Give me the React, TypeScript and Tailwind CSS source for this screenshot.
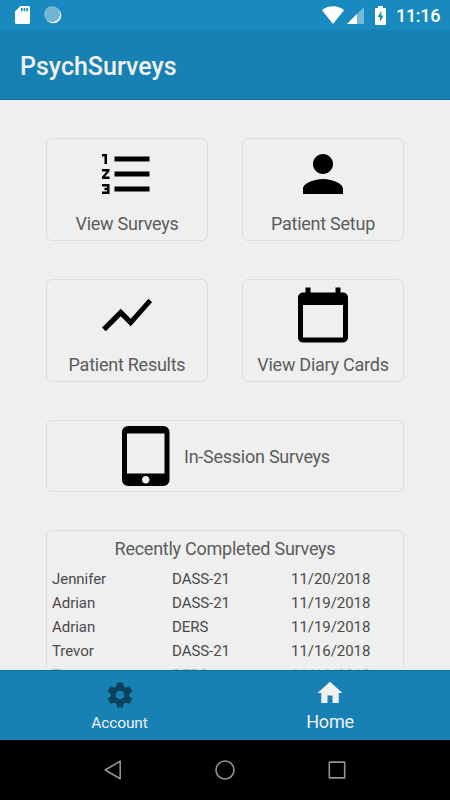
import React from 'react';

interface IconProps {
  path: string;
  className: string;
}

interface MenuCardProps {
  label: string;
  icon: string;
}

interface SurveyRow {
  name: string;
  survey: string;
  date: string;
}

const icons = {
  list: 'M2 17h2v.5H3v1h1v.5H2v1h3v-4H2v1zm1-9h1V4H2v1h1v3zm-1 3h1.8L2 13.1v.9h3v-1H3.2L5 10.9V10H2v1zm5-6v2h14V5H7zm0 14h14v-2H7v2zm0-6h14v-2H7v2z',
  person:
    'M12 12c2.21 0 4-1.79 4-4s-1.79-4-4-4-4 1.79-4 4 1.79 4 4 4zm0 2c-2.67 0-8 1.34-8 4v2h16v-2c0-2.66-5.33-4-8-4z',
  chart: 'M3.5 18.49l6-6.01 4 4L22 6.92l-1.41-1.41-7.09 7.97-4-4L2 16.99z',
  calendar:
    'M20 3h-1V1h-2v2H7V1H5v2H4c-1.1 0-2 .9-2 2v16c0 1.1.9 2 2 2h16c1.1 0 2-.9 2-2V5c0-1.1-.9-2-2-2zm0 18H4V8h16v13z',
  tablet:
    'M18.5 0h-14C3.12 0 2 1.12 2 2.5v19C2 22.88 3.12 24 4.5 24h14c1.38 0 2.5-1.12 2.5-2.5v-19C21 1.12 19.88 0 18.5 0zm-7 23c-.83 0-1.5-.67-1.5-1.5s.67-1.5 1.5-1.5 1.5.67 1.5 1.5-.67 1.5-1.5 1.5zm7.5-4H4V3h15v16z',
  settings:
    'M19.43 12.98c.04-.32.07-.64.07-.98s-.03-.66-.07-.98l2.11-1.65c.19-.15.24-.42.12-.64l-2-3.46c-.12-.22-.39-.3-.61-.22l-2.49 1c-.52-.4-1.08-.73-1.69-.98l-.38-2.65C14.46 2.18 14.25 2 14 2h-4c-.25 0-.46.18-.49.42l-.38 2.65c-.61.25-1.17.59-1.69.98l-2.49-1c-.23-.09-.49 0-.61.22l-2 3.46c-.13.22-.07.49.12.64l2.11 1.65c-.04.32-.07.65-.07.98s.03.66.07.98l-2.11 1.65c-.19.15-.24.42-.12.64l2 3.46c.12.22.39.3.61.22l2.49-1c.52.4 1.08.73 1.69.98l.38 2.65c.03.24.24.42.49.42h4c.25 0 .46-.18.49-.42l.38-2.65c.61-.25 1.17-.59 1.69-.98l2.49 1c.23.09.49 0 .61-.22l2-3.46c.12-.22.07-.49-.12-.64l-2.11-1.65zM12 15.5c-1.93 0-3.5-1.57-3.5-3.5s1.57-3.5 3.5-3.5 3.5 1.57 3.5 3.5-1.57 3.5-3.5 3.5z',
  home: 'M10 20v-6h4v6h5v-8h3L12 3 2 12h3v8z',
};

const surveys: SurveyRow[] = [
  { name: 'Jennifer', survey: 'DASS-21', date: '11/20/2018' },
  { name: 'Adrian', survey: 'DASS-21', date: '11/19/2018' },
  { name: 'Adrian', survey: 'DERS', date: '11/19/2018' },
  { name: 'Trevor', survey: 'DASS-21', date: '11/16/2018' },
  { name: 'Trevor', survey: 'DERS', date: '11/16/2018' },
];

function Icon({ path, className }: IconProps) {
  return (
    <svg viewBox="0 0 24 24" fill="currentColor" className={className}>
      <path d={path} />
    </svg>
  );
}

function MenuCard({ label, icon }: MenuCardProps) {
  return (
    <button className="flex h-[103px] flex-col items-center rounded-md border border-[#dcdcdc] pt-[5px]">
      <Icon path={icon} className="size-[60px] text-black" />
      <span className="mt-2 text-[18px] leading-6 tracking-[-0.25px]">{label}</span>
    </button>
  );
}

function StatusBar() {
  return (
    <div className="flex h-[30px] items-center bg-[#198abf] pr-[10px] pl-[15px] text-white">
      {/* SD card */}
      <svg viewBox="0 0 15 18" className="h-[18px] w-[15px]" fill="currentColor">
        <path
          fillRule="evenodd"
          d="M5.5 0H13.5Q15 0 15 1.5V16.5Q15 18 13.5 18H1.5Q0 18 0 16.5V5.5ZM6 2V5.3H7.7V2ZM8.7 2V5.3H10.3V2ZM11.3 2V5.3H13V2Z"
        />
      </svg>
      {/* Sync spinner */}
      <svg viewBox="0 0 18 18" className="ml-[14px] size-[18px]">
        <circle cx="9.3" cy="9.3" r="8" fill="#fff" />
        <circle cx="8.2" cy="8.2" r="8" fill="#6fb3d5" />
        <circle
          cx="8.2"
          cy="8.2"
          r="7.2"
          fill="none"
          stroke="#a5d0e5"
          strokeWidth="0.8"
          strokeDasharray="1 1.3"
        />
      </svg>
      <div className="ml-auto flex items-center">
        {/* Wifi */}
        <svg viewBox="0 0 22 18" className="h-[18px] w-[22px]" fill="currentColor">
          <path d="M11 18L0 4.2Q4.5 0.3 11 0.3T22 4.2Z" />
        </svg>
        {/* Signal */}
        <svg viewBox="0 0 17 17" className="ml-[3px] size-[17px]" fill="currentColor">
          <path d="M17 0V17H0Z" opacity="0.4" />
          <path d="M10 7V17H0Z" />
        </svg>
        {/* Battery */}
        <svg viewBox="0 0 11 19" className="ml-[11px] h-[19px] w-[11px]" fill="currentColor">
          <path
            fillRule="evenodd"
            d="M3 0H8V2H10Q11 2 11 3V18Q11 19 10 19H1Q0 19 0 18V3Q0 2 1 2H3ZM6.3 5L2.5 11H5V16L8.5 9.5H6.3Z"
          />
        </svg>
        <span className="ml-[10px] w-[44px] pt-px text-[18px] leading-[29px] font-medium tracking-[-0.3px] whitespace-nowrap">
          11:16
        </span>
      </div>
    </div>
  );
}

export default function App() {
  return (
    <div className="flex h-[800px] w-[450px] flex-col overflow-hidden bg-[#efefef] font-[Roboto,sans-serif] text-[#5c5c5c]">
      <StatusBar />
      <header className="flex h-[70px] items-center border-b border-[#0870a8] bg-[#1881b4] px-5">
        <h1 className="pt-[5px] text-[25px] leading-8 font-medium text-[#f1f1f1]">PsychSurveys</h1>
      </header>

      <main className="min-h-0 flex-1 overflow-hidden px-[46px] pt-[38px]">
        <div className="grid grid-cols-[162px_162px] justify-between gap-y-[38px]">
          <MenuCard label="View Surveys" icon={icons.list} />
          <MenuCard label="Patient Setup" icon={icons.person} />
          <MenuCard label="Patient Results" icon={icons.chart} />
          <MenuCard label="View Diary Cards" icon={icons.calendar} />
        </div>

        <button className="mt-[38px] flex h-[72px] w-full items-center rounded-md border border-[#dcdcdc] pl-[70px]">
          <Icon path={icons.tablet} className="size-[60px] text-black" />
          <span className="ml-[7px] pt-0.5 text-[18px] leading-6 tracking-[-0.25px]">
            In-Session Surveys
          </span>
        </button>

        {/* Recent surveys */}
        <section className="mt-[38px] rounded-md border border-[#dcdcdc] px-[5px] pt-[6px]">
          <h2 className="text-center text-[18px] leading-6 tracking-[-0.25px]">
            Recently Completed Surveys
          </h2>
          <div className="mt-[6px] text-[15px] leading-6 tracking-[-0.05px] text-[#4a4a4a]">
            {surveys.map((row, i) => (
              <div key={i} className="grid h-6 grid-cols-[120px_119px_1fr]">
                <span>{row.name}</span>
                <span>{row.survey}</span>
                <span>{row.date}</span>
              </div>
            ))}
          </div>
        </section>
      </main>

      {/* Bottom tabs */}
      <nav className="relative flex h-[70px] justify-center border-t border-[#0870a8] bg-[#1881b4] text-[#f1f1f1] shadow-[0_-2px_0_rgba(236,236,236,0.7)]">
        <button className="flex w-[210px] flex-col items-center pt-[8.5px]">
          <Icon path={icons.settings} className="size-[30px] text-[#0d405a]" />
          <span className="mt-[3px] text-[15.5px] leading-5 tracking-[-0.15px]">Account</span>
        </button>
        <button className="flex w-[211px] flex-col items-center pt-[6.5px]">
          <Icon path={icons.home} className="size-[30px]" />
          <span className="mt-1 text-[18px] leading-5 tracking-[-0.25px]">Home</span>
        </button>
      </nav>

      {/* System navigation */}
      <div className="flex h-[60px] items-center justify-center gap-[92px] bg-black">
        <svg viewBox="0 0 20 20" className="size-5" fill="none" stroke="#929292" strokeWidth="1.6">
          <path d="M17.2 1.2V18.8L2.2 10Z" strokeLinejoin="round" />
        </svg>
        <svg viewBox="0 0 20 20" className="size-5" fill="none" stroke="#929292" strokeWidth="1.6">
          <circle cx="10" cy="10" r="9" />
        </svg>
        <svg viewBox="0 0 20 20" className="size-5" fill="none" stroke="#929292" strokeWidth="1.6">
          <rect x="2.3" y="2.1" width="15.4" height="15.8" rx="0.5" />
        </svg>
      </div>
    </div>
  );
}
